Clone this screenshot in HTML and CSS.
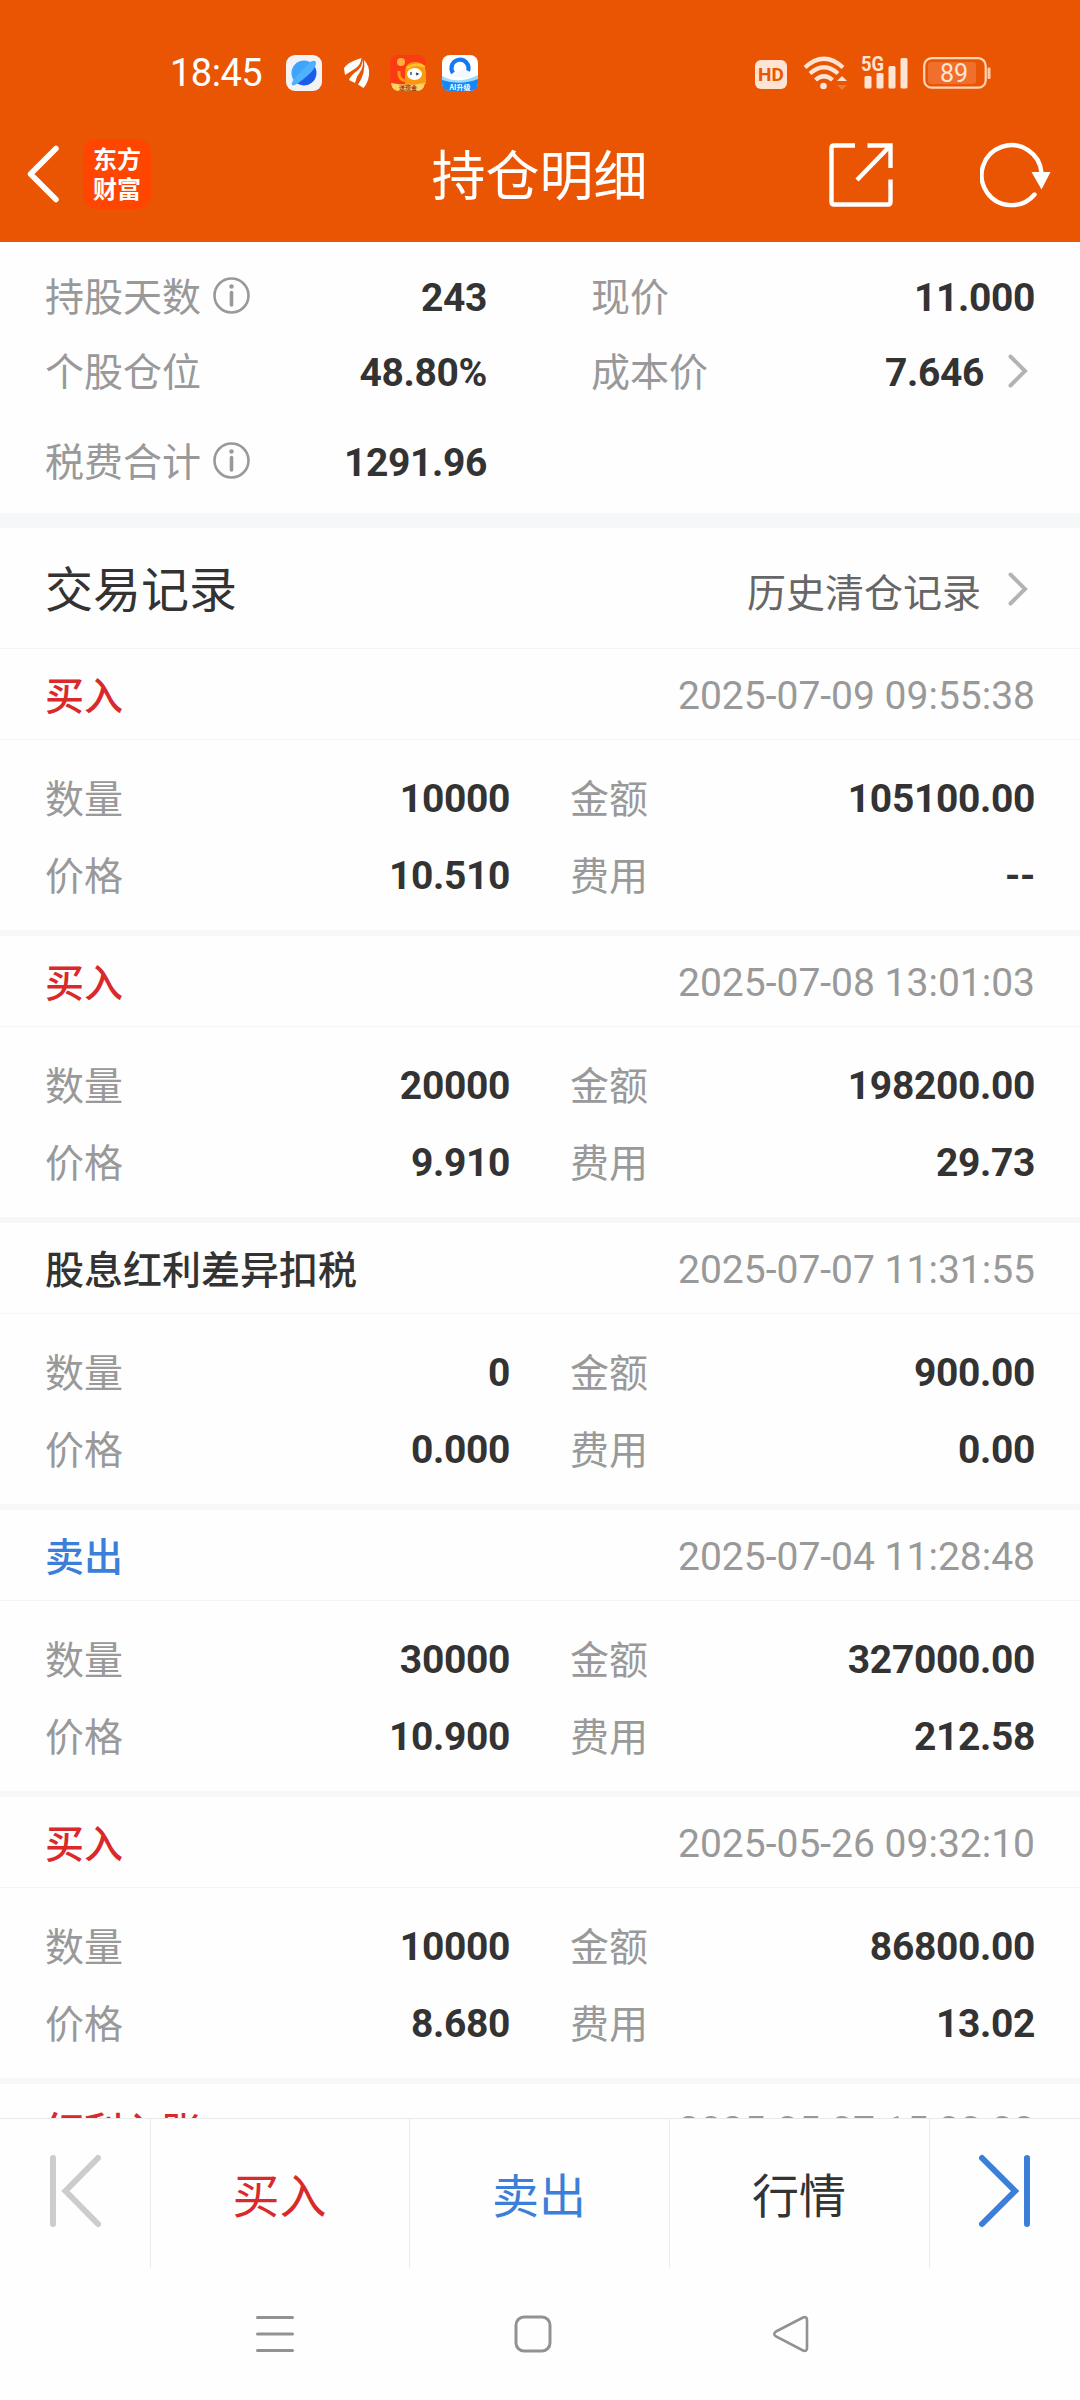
FILE: index.html
```html
<!DOCTYPE html>
<html lang="zh-CN">
<head>
<meta charset="utf-8">
<title>持仓明细</title>
<link rel="stylesheet" href="styles.css">
</head>
<body>
<div class="screen">
  <header class="top">
    <div class="status">
      <span class="clock">18:45</span>
      <svg class="app-a" width="36" height="36" viewBox="0 0 36 36">
        <rect width="36" height="36" rx="9" fill="#f3f3f6"/>
        <circle cx="18" cy="18" r="12.5" fill="#3ea5fb"/>
        <path d="M29 12A12.500 12.500 0 0 1 9.500 27Q22 23 29 12Z" fill="#1d5ce8"/>
        <path d="M24 7Q30 4 30 8Q30 13 21 21Q11 30 7 30.500Q4 30 8 24" fill="#4fb0fc"/>
      </svg>
      <svg class="app-b" width="26" height="30" viewBox="0 0 26 30">
        <path d="M17.500 0Q4 4 0 10L1 17Q6 14 12 10Q17 6 17.500 0Z" fill="#fff"/>
        <path d="M18.500 1Q19 8 13 13Q7 17 5 22L11 25Q12 19 16 14Q20 9 18.500 1Z" fill="#fff"/>
        <path d="M20 2Q26 8 25 17Q24 25 19.500 30L14 26.500Q22 15 20 2Z" fill="#fff"/>
      </svg>
      <svg class="app-c" width="36" height="36" viewBox="0 0 36 36">
        <rect width="36" height="36" rx="8" fill="#fb3b13"/>
        <circle cx="11" cy="7" r="4" fill="#fdb03c"/>
        <path d="M15 29V18Q15 7 25 7Q36 7 36 18V29Z" fill="#fb9a10"/>
        <path d="M9 16Q8 25 16 26" stroke="#fb9a10" stroke-width="3" fill="none"/>
        <path d="M17 13Q26 7 35 12" stroke="#ffc22c" stroke-width="2.500" fill="none"/>
        <ellipse cx="24.500" cy="19" rx="7.500" ry="6" fill="#fff"/>
        <path d="M21 17V20M26 18L28 19L26 20" stroke="#333" stroke-width="1.300" fill="none"/>
        <path d="M1 28Q18 31 35 28Q34 36 27 36H9Q2 36 1 28Z" fill="#fed461"/>
        <text x="18" y="35" font-size="6" text-anchor="middle" fill="#a33a10" class="tiny">送现金</text>
      </svg>
      <svg class="app-d" width="36" height="36" viewBox="0 0 36 36">
        <rect width="36" height="36" rx="8" fill="#fff"/>
        <path d="M0 23Q18 30 36 23V28Q36 36 28 36H8Q0 36 0 28Z" fill="#1687f8"/>
        <path d="M0 21Q16 30 36 20V24Q18 31 0 25Z" fill="#9adafd"/>
        <path d="M11 18A8.500 8.500 0 1 1 26 16" stroke="#1479f2" stroke-width="4.200" fill="none"/>
        <path d="M12 22Q12 17 17 17Q22 10 27 18Q30 22 25 23Z" fill="#f2f8ff"/>
        <text x="18" y="34.500" font-size="7" text-anchor="middle" fill="#fff" class="tiny">AI升级</text>
      </svg>
      <div class="status-right">
        <span class="hd">HD</span>
        <svg class="wifi" width="45" height="36" viewBox="0 0 45 36" fill="none" stroke="#ffe3d3">
          <path d="M2 12.500Q21 -5 40 12.500" stroke-width="4.200"/>
          <path d="M7 18.500Q21 6 35 18.500" stroke-width="4.200"/>
          <path d="M12.500 25Q21 17.500 29.500 25" stroke-width="4.200"/>
          <circle cx="20.500" cy="31" r="3.300" fill="#ffe3d3" stroke="none"/>
          <path d="M34 26L39 21L44 26Z" fill="#ffe3d3" stroke="none"/>
          <path d="M34 30L39 35L44 30Z" fill="#f27530" stroke="none"/>
        </svg>
        <svg class="signal" width="48" height="36" viewBox="0 0 48 36" fill="#ffe3d3">
          <text x="0" y="16" font-size="21" textLength="23" lengthAdjust="spacingAndGlyphs" class="net">5G</text>
          <rect x="3.500" y="21" width="7" height="12.500" rx="1.500"/>
          <rect x="15.500" y="18" width="7" height="15.500" rx="1.500"/>
          <rect x="27.500" y="11" width="7" height="22.500" rx="1.500"/>
          <rect x="39.500" y="3" width="7" height="30.500" rx="1.500"/>
        </svg>
        <svg class="battery" width="68" height="32" viewBox="0 0 68 32">
          <rect x="1.200" y="1.200" width="61.500" height="29.500" rx="7.500" fill="none" stroke="#ffd3b5" stroke-width="2.200"/>
          <rect x="5" y="5" width="48" height="22" rx="3" fill="#f06f2c"/>
          <rect x="64.500" y="10.500" width="3" height="11.500" rx="1" fill="#ffc9a8"/>
          <text x="31" y="25" font-size="25" text-anchor="middle" fill="#ffe3d3" class="level">89</text>
        </svg>
      </div>
    </div>
    <nav class="titlebar">
      <div class="title-left">
        <svg width="32" height="58" viewBox="0 0 32 58"><path d="M29 3.500L3.500 29L29 54.500" fill="none" stroke="#fff" stroke-width="5.500" stroke-linecap="round" stroke-linejoin="round"/></svg>
        <div class="brand"><span>东方</span><span>财富</span></div>
      </div>
      <h1 class="title">持仓明细</h1>
      <div class="title-right">
        <svg width="64" height="64" viewBox="0 0 64 64" fill="none" stroke="#fff" stroke-width="4.400">
          <path d="M26 2.500H5Q2.500 2.500 2.500 5V59Q2.500 61.500 5 61.500H59Q61.500 61.500 61.500 59V36.500"/>
          <path d="M38.500 2.500H61.500V25M61 3L28 37"/>
        </svg>
        <svg width="72" height="66" viewBox="0 0 72 66">
          <path d="M54.500 52.500A30 30 0 1 1 61.500 31" fill="none" stroke="#fff" stroke-width="4.400" stroke-linecap="round"/>
          <path d="M51.500 30H70.500L61.500 47.500Z" fill="#fff"/>
        </svg>
      </div>
    </nav>
  </header>

  <section class="summary">
    <div class="sum-row">
      <span class="label">持股天数<svg class="info" width="37" height="37" viewBox="0 0 37 37"><circle cx="18.500" cy="18.500" r="17" fill="none" stroke="#999" stroke-width="2.600"/><circle cx="18.500" cy="9.500" r="2.200" fill="#999"/><path d="M18.500 15.500V28" stroke="#999" stroke-width="3.600" stroke-linecap="round"/></svg></span>
      <b>243</b><span class="label second">现价</span><b>11.000</b>
    </div>
    <div class="sum-row">
      <span class="label">个股仓位</span>
      <b>48.80%</b><span class="label second">成本价</span><b class="linked">7.646<svg class="chev" width="20" height="34" viewBox="0 0 20 34"><path d="M2.500 2.500L17 17L2.500 31.500" fill="none" stroke="#b3b3b3" stroke-width="4" stroke-linecap="round"/></svg></b>
    </div>
    <div class="sum-row last">
      <span class="label">税费合计<svg class="info" width="37" height="37" viewBox="0 0 37 37"><circle cx="18.500" cy="18.500" r="17" fill="none" stroke="#999" stroke-width="2.600"/><circle cx="18.500" cy="9.500" r="2.200" fill="#999"/><path d="M18.500 15.500V28" stroke="#999" stroke-width="3.600" stroke-linecap="round"/></svg></span>
      <b>1291.96</b>
    </div>
  </section>

  <main class="records">
    <div class="section-head">
      <h2>交易记录</h2>
      <a class="history">历史清仓记录<svg class="chev" width="20" height="34" viewBox="0 0 20 34"><path d="M2.500 2.500L17 17L2.500 31.500" fill="none" stroke="#b3b3b3" stroke-width="4" stroke-linecap="round"/></svg></a>
    </div>
    <article class="record">
      <div class="rec-head"><span class="kind buy">买入</span><time>2025-07-09 09:55:38</time></div>
      <div class="rec-body"><span>数量</span><b>10000</b><span class="second">金额</span><b>105100.00</b><span>价格</span><b>10.510</b><span class="second">费用</span><b>--</b></div>
    </article>
    <article class="record">
      <div class="rec-head"><span class="kind buy">买入</span><time>2025-07-08 13:01:03</time></div>
      <div class="rec-body"><span>数量</span><b>20000</b><span class="second">金额</span><b>198200.00</b><span>价格</span><b>9.910</b><span class="second">费用</span><b>29.73</b></div>
    </article>
    <article class="record">
      <div class="rec-head"><span class="kind">股息红利差异扣税</span><time>2025-07-07 11:31:55</time></div>
      <div class="rec-body"><span>数量</span><b>0</b><span class="second">金额</span><b>900.00</b><span>价格</span><b>0.000</b><span class="second">费用</span><b>0.00</b></div>
    </article>
    <article class="record">
      <div class="rec-head"><span class="kind sell">卖出</span><time>2025-07-04 11:28:48</time></div>
      <div class="rec-body"><span>数量</span><b>30000</b><span class="second">金额</span><b>327000.00</b><span>价格</span><b>10.900</b><span class="second">费用</span><b>212.58</b></div>
    </article>
    <article class="record">
      <div class="rec-head"><span class="kind buy">买入</span><time>2025-05-26 09:32:10</time></div>
      <div class="rec-body"><span>数量</span><b>10000</b><span class="second">金额</span><b>86800.00</b><span>价格</span><b>8.680</b><span class="second">费用</span><b>13.02</b></div>
    </article>
    <article class="record">
      <div class="rec-head"><span class="kind buy">红利入账</span><time>2025-05-07 15:00:00</time></div>
    </article>
  </main>

  <footer class="actions">
    <div><svg width="52" height="74" viewBox="0 0 52 74" fill="none" stroke="#ccc" stroke-width="6" stroke-linecap="round"><path d="M4 4V70M49 4L16.500 37L49 70"/></svg></div>
    <div class="buy">买入</div>
    <div class="sell">卖出</div>
    <div>行情</div>
    <div><svg width="52" height="74" viewBox="0 0 52 74" fill="none" stroke="#3b7fd9" stroke-width="6" stroke-linecap="round"><path d="M48 4V70M3 4L36 37L3 70"/></svg></div>
  </footer>

  <div class="sysnav">
    <svg width="38" height="38" viewBox="0 0 38 38"><path d="M1.500 2.500H36.500M1.500 19H36.500M1.500 35.500H36.500" stroke="#929292" stroke-width="3" stroke-linecap="round"/></svg>
    <svg width="38" height="38" viewBox="0 0 38 38"><rect x="2" y="2" width="34" height="34" rx="8" fill="none" stroke="#929292" stroke-width="3"/></svg>
    <svg width="38" height="38" viewBox="0 0 38 38"><path d="M4 16.500L31 2.500Q35 1 35 5V33Q35 37 31 35.500L4 21.500Q0.500 19 4 16.500Z" fill="none" stroke="#929292" stroke-width="2.600"/></svg>
  </div>
</div>
</body>
</html>
```
FILE: styles.css
```css
* { box-sizing: border-box; }
body {
  margin: 0;
  background: #fefefe;
  color: #333;
  font-family: Roboto, "Noto Sans CJK SC", sans-serif;
}
svg { display: block; flex: none; }
h1, h2 { margin: 0; font-weight: 400; }
.screen {
  width: 1080px;
  height: 2400px;
  display: flex;
  flex-direction: column;
  overflow: hidden;
}

/* header */
.top { height: 242px; flex: none; background: #ea5504; color: #fff; }
.status {
  height: 106px;
  padding: 40px 89px 0 170px;
  display: flex;
  align-items: center;
}
.clock { width: 116px; font-size: 38px; line-height: 66px; letter-spacing: -0.5px; }
.app-b { margin-left: 22px; }
.app-c { margin-left: 20px; }
.app-d { margin-left: 16px; }
.tiny { font-family: "Noto Sans CJK SC", sans-serif; font-weight: 700; }
.status-right { margin-left: auto; display: flex; align-items: center; }
.hd {
  width: 32px;
  height: 29px;
  margin-top: 2px;
  border-radius: 6px;
  background: #ffe3d3;
  color: #ea5504;
  font: 700 19px/30px Roboto, sans-serif;
  text-align: center;
}
.wifi { margin-left: 16px; }
.signal { margin-left: 13px; }
.battery { margin-left: 14px; }
.net { font-family: Roboto, sans-serif; font-weight: 700; }
.level { font-family: Roboto, sans-serif; }
.titlebar {
  height: 136px;
  padding: 0 28px 0 27px;
  display: grid;
  grid-template-columns: 1fr auto 1fr;
  align-items: center;
}
.title-left { display: flex; align-items: center; gap: 24px; }
.brand {
  width: 68px;
  height: 70px;
  padding-top: 4px;
  display: flex;
  flex-direction: column;
  align-items: center;
  border-radius: 14px;
  background: #ff4600;
  font: 700 24px/30px "Noto Sans CJK SC", sans-serif;
}
.brand span { height: 30px; }
.title { font-size: 54px; line-height: 80px; padding-top: 8px; }
.title-right { display: flex; align-items: center; justify-content: flex-end; gap: 87px; padding-top: 1px; }

/* summary */
.summary { height: 286px; flex: none; padding: 18px 45px 0; border-bottom: 15px solid #f6f7f9; }
.sum-row {
  height: 75px;
  display: grid;
  grid-template-columns: 220px 222px 106px 1fr;
  align-items: center;
  font-size: 39px;
  line-height: 56px;
}
.sum-row.last { margin-top: 15px; }
.sum-row b, .rec-body b { font-weight: 700; text-align: right; letter-spacing: -0.35px; }
.label { display: flex; align-items: center; color: #999; white-space: nowrap; }
.label.second { padding-left: 104px; }
.info { margin: 0 0 4px 12px; }
.linked { display: flex; align-items: center; justify-content: flex-end; }
.chev { margin: 0 7px 3px 24px; }

/* records */
.records { flex: 1; min-height: 0; overflow: hidden; }
.section-head {
  height: 121px;
  padding: 0 45px;
  display: flex;
  align-items: center;
  justify-content: space-between;
  border-bottom: 1px solid #f5f5f6;
}
.section-head h2 { font-size: 48px; padding-bottom: 4px; }
.history { display: flex; align-items: center; padding-top: 4px; font-size: 39px; color: #666; }
.history .chev { margin-left: 27px; }
.record { height: 287px; border-bottom: 6px solid #f6f7f9; }
.rec-head {
  height: 91px;
  padding: 0 45px;
  display: flex;
  align-items: center;
  justify-content: space-between;
  border-bottom: 1px solid #f5f5f6;
  font-size: 39px;
}
.kind { font-weight: 500; padding-bottom: 2px; }
.rec-head time { padding-top: 3px; color: #999; }
.buy { color: #d9292b; }
.sell { color: #3b7fd9; }
.rec-body {
  padding: 20px 45px 0;
  display: grid;
  grid-template-columns: 120px 345px 140px 1fr;
  grid-auto-rows: 77px;
  align-items: center;
  font-size: 39px;
}
.rec-body span { padding-bottom: 6px; color: #999; }
.rec-body .second { padding-left: 60px; }

/* bottom action bar */
.actions {
  height: 150px;
  flex: none;
  display: grid;
  grid-template-columns: 151px 259px 260px 260px 150px;
  border-top: 1px solid #e9e9e9;
  font-size: 47px;
}
.actions div {
  display: flex;
  align-items: center;
  justify-content: center;
  padding: 0 1px 3px 0;
  border-right: 1px solid #ececec;
}
.actions svg { margin-bottom: 2px; }
.actions div:last-child { border-right: 0; padding-right: 0; }

/* system navigation */
.sysnav {
  height: 132px;
  flex: none;
  padding: 0 270px 0 256px;
  display: flex;
  align-items: center;
  justify-content: space-between;
}
```
